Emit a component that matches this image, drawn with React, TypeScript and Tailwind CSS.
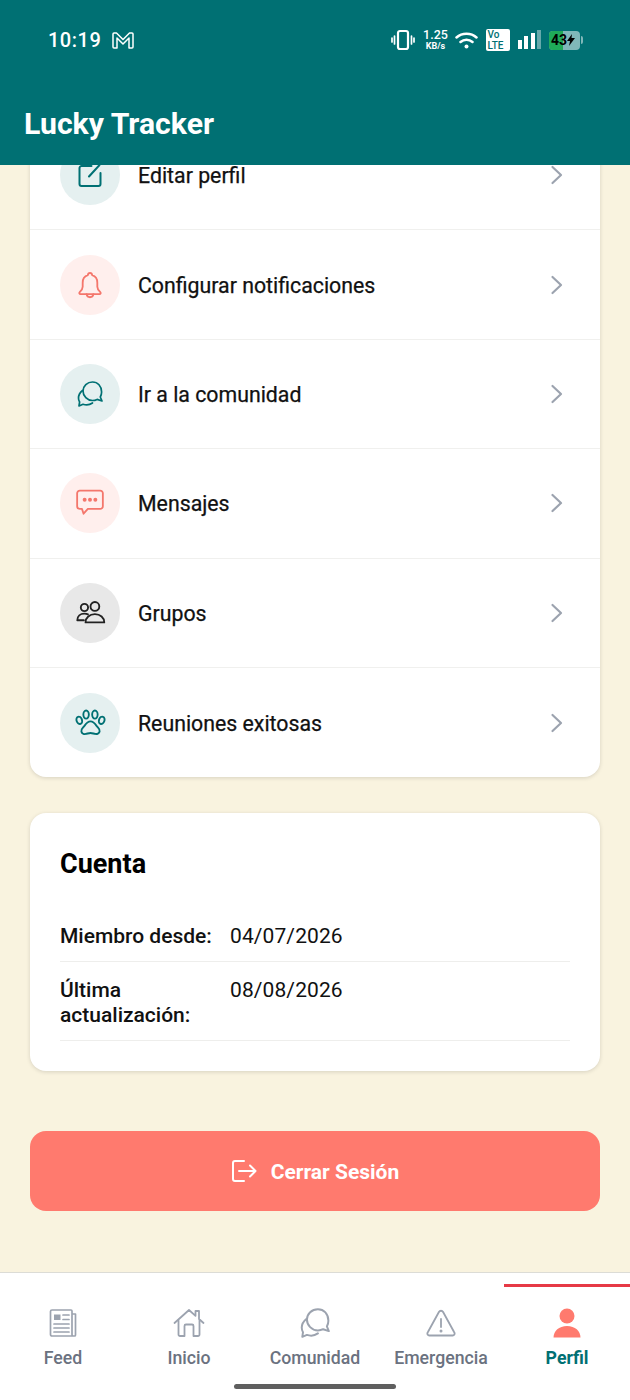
import React from "react";

const s = { fill: "none", stroke: "currentColor", strokeLinecap: "round" as const, strokeLinejoin: "round" as const };

function EditIcon() {
  return (
    <svg width="26" height="26" viewBox="0 0 26 26" {...s} strokeWidth="2">
      <path d="M14.500 4H4.500a2 2 0 0 0-2 2v16a2 2 0 0 0 2 2h17a2 2 0 0 0 2-2V11" />
      <path d="M12 14.500 22.500 3" />
    </svg>
  );
}
function BellIcon() {
  return (
    <svg width="32" height="32" viewBox="0 0 28 28" {...s} strokeWidth="1.600">
      <path d="M14 3.500c-1.200 0-1.800.9-1.900 1.900C9.200 6.300 7.600 8.800 7.600 12v3.500c0 2.200-1.200 3.400-2.600 4.700-.8.8-.3 1.800.7 1.800h16.600c1 0 1.500-1 .7-1.800-1.400-1.300-2.600-2.500-2.600-4.700V12c0-3.200-1.600-5.700-4.500-6.600C15.800 4.400 15.200 3.500 14 3.500Z" />
      <path d="M11 22c.3 1.700 1.400 2.700 3 2.700s2.700-1 3-2.700" />
    </svg>
  );
}
function ChatsIcon({ size = 26 }: { size?: number }) {
  return (
    <svg width={size} height={size} viewBox="0 0 26 26" {...s} strokeWidth="1.700">
      <path d="M15.500 1C10.300 1 6 5 6 10s4.300 9.500 9.500 9.500c1.700 0 3.200-.4 4.600-1.100L25 20l-1.700-4c.8-1.500 1.300-3.200 1.300-5C24.600 5 20.700 1 15.500 1Z" />
      <path d="M5.500 9.500C3 11.500 1.500 14 1.500 17c0 1.500.4 2.900 1.100 4L2 25l4-1.700c3.500 1.200 7 .5 9.500-1.300" />
    </svg>
  );
}
function MessageIcon() {
  return (
    <svg width="30" height="30" viewBox="0 0 28 28" {...s} strokeWidth="1.700">
      <path d="M4.500 2.500h19a2.500 2.500 0 0 1 2.500 2.500v12a2.500 2.500 0 0 1-2.500 2.500H12l-4 4.500-1.500-4.500h-2A2.500 2.500 0 0 1 2 17V5a2.500 2.500 0 0 1 2.500-2.500Z" />
      <circle cx="9" cy="11" r="1" fill="currentColor" />
      <circle cx="14" cy="11" r="1" fill="currentColor" />
      <circle cx="19" cy="11" r="1" fill="currentColor" />
    </svg>
  );
}
function GroupIcon() {
  return (
    <svg width="33" height="33" viewBox="0 0 30 30" {...s} strokeWidth="1.700">
      <circle cx="9.500" cy="10.500" r="3.300" />
      <circle cx="19" cy="9.500" r="4" />
      <path d="M9 22H3c0-3.600 2.700-6 6.500-6 1.200 0 2.300.2 3.200.7" />
      <path d="M10.500 24c0-4.300 3.600-7.500 8.500-7.500s8.500 3.200 8.500 7.500Z" />
    </svg>
  );
}
function PawIcon() {
  return (
    <svg width="33" height="33" viewBox="0 0 30 30" {...s} strokeWidth="1.700">
      <ellipse cx="4.800" cy="13" rx="2.500" ry="3.400" transform="rotate(-20 4.800 13)" />
      <ellipse cx="11" cy="7.800" rx="2.500" ry="3.700" />
      <ellipse cx="19" cy="7.800" rx="2.500" ry="3.700" />
      <ellipse cx="25.200" cy="13" rx="2.500" ry="3.400" transform="rotate(20 25.200 13)" />
      <path d="M15 14c-2.800 0-4.300 2.300-5.600 4.200-1.200 1.700-3.200 2.700-2.700 5 .4 1.800 2.300 2.600 4.100 2.200 1.500-.3 2.800-.9 4.200-.9s2.700.6 4.200.9c1.800.4 3.700-.4 4.100-2.200.5-2.300-1.500-3.300-2.700-5C19.300 16.300 17.800 14 15 14Z" />
    </svg>
  );
}
function NewsIcon() {
  return (
    <svg width="30" height="30" viewBox="0 0 30 30" fill="none" stroke="currentColor" strokeWidth="1.700" strokeLinejoin="round" strokeLinecap="round">
      <path d="M24 6h3.500v21a1 1 0 0 1-1 1H4a1.500 1.500 0 0 1-1.500-1.500V3.500A1.500 1.500 0 0 1 4 2h19a1 1 0 0 1 1 1v23.500a1.500 1.500 0 0 0 1.500 1.500" />
      <rect x="6" y="6.500" width="6.500" height="5.500" fill="currentColor" stroke="none" />
      <path d="M15 7h6M15 11.500h6M6 16h15M6 20h15M6 24h15" />
    </svg>
  );
}
function HomeIcon() {
  return (
    <svg width="32" height="30" viewBox="0 0 32 30" fill="none" stroke="currentColor" strokeWidth="1.800" strokeLinejoin="round" strokeLinecap="round">
      <path d="M1.500 15 16 2l6.500 5.800V3h3.500v8l4.500 4" />
      <path d="M5.500 12.500V26.500a1.500 1.500 0 0 0 1.500 1.500h4.500V18a1.500 1.500 0 0 1 1.500-1.500h6a1.500 1.500 0 0 1 1.500 1.500v10H25a1.500 1.500 0 0 0 1.500-1.500V12.500" />
    </svg>
  );
}
function WarnIcon() {
  return (
    <svg width="30" height="28" viewBox="0 0 30 28" fill="none" stroke="currentColor" strokeWidth="1.800" strokeLinejoin="round" strokeLinecap="round">
      <path d="M12.900 3 1.800 23.300A2 2 0 0 0 3.600 26.500h22.800a2 2 0 0 0 1.800-3.200L17.100 3a2.400 2.400 0 0 0-4.200 0Z" />
      <path d="M15 10v8" />
      <circle cx="15" cy="22" r=".6" fill="currentColor" />
    </svg>
  );
}
function PersonIcon() {
  return (
    <svg width="28" height="30" viewBox="0 0 28 30" fill="#ff7a6e">
      <circle cx="14" cy="8" r="7.500" />
      <path d="M0.500 29.500C.5 23 6 18 14 18s13.500 5 13.500 11.500Z" />
    </svg>
  );
}
function LogoutIcon() {
  return (
    <svg width="26" height="24" viewBox="0 0 26 24" fill="none" stroke="currentColor" strokeWidth="2" strokeLinecap="round" strokeLinejoin="round">
      <path d="M13 2H4a2 2 0 0 0-2 2v16a2 2 0 0 0 2 2h9" />
      <path d="M8 12h16M19 6.500 24.500 12 19 17.500" />
    </svg>
  );
}
function Chevron() {
  return (
    <svg width="14" height="20" viewBox="0 0 14 20" fill="none" stroke="#9ca3af" strokeWidth="2.200" strokeLinecap="round" strokeLinejoin="round">
      <path d="m2.500 2 8.500 8-8.500 8" />
    </svg>
  );
}

function Row({ icon, label, circle, color, last }: { icon: React.ReactNode; label: string; circle: string; color: string; last?: boolean }) {
  return (
    <div className={`flex h-[109.4px] items-center pl-[30px] pr-[36px] ${last ? "" : "border-b border-[#f0f0ee]"}`}>
      <div className={`flex h-[60px] w-[60px] shrink-0 items-center justify-center rounded-full ${circle} ${color}`}>{icon}</div>
      <span className="ml-[18px] flex-1 pt-[2px] text-[21.300px] font-normal leading-[24px] text-[#111111] [-webkit-text-stroke:0.25px_#111111]">{label}</span>
      <Chevron />
    </div>
  );
}

function NavItem({ icon, label, active }: { icon: React.ReactNode; label: string; active?: boolean }) {
  return (
    <div className="flex flex-1 flex-col items-center">
      <div className={`flex h-[32px] items-center justify-center ${active ? "" : "text-[#9ca3af]"}`}>{icon}</div>
      <span className={`mt-[7px] text-[17.7px] leading-[24px] ${active ? "font-bold text-[#007073]" : "font-medium text-[#6b7280]"}`}>{label}</span>
    </div>
  );
}

function StatusBar() {
  return (
    <div className="flex h-[80px] items-center justify-between pl-[48px] pr-[47px] text-white">
      <div className="flex items-center gap-[11px]">
        <span className="text-[20px] font-medium leading-none tracking-[0.5px]">10:19</span>
        <svg width="22" height="18" viewBox="0 0 22 18" fill="none" stroke="currentColor" strokeWidth="1.500" strokeLinejoin="round">
          <path d="M2 2h2.500L11 8.500 17.500 2H20a1 1 0 0 1 1 1v13a1 1 0 0 1-1 1h-3V7l-6 6-6-6v10H2a1 1 0 0 1-1-1V3a1 1 0 0 1 1-1Z" />
        </svg>
      </div>
      <div className="flex items-center">
        <svg width="24" height="22" viewBox="0 0 24 22" fill="none" stroke="currentColor" strokeWidth="2.200" strokeLinecap="round">
          <rect x="7" y="2" width="10" height="18" rx="2" />
          <path d="M3.500 7v8M1 9v4M20.500 7v8M23 9v4" strokeWidth="1.700" />
        </svg>
        <div className="ml-[9px] flex w-[24px] flex-col items-center font-medium leading-none">
          <span className="text-[12.500px] leading-[12px]">1.25</span>
          <span className="text-[9px] font-bold leading-[10px]">KB/s</span>
        </div>
        <svg className="ml-[7px]" width="23" height="17" viewBox="0 0 23 17" fill="none" stroke="currentColor" strokeWidth="2.500" strokeLinecap="round">
          <path d="M1.500 5.500C7 .5 16 .5 21.500 5.500M5.500 10c3.500-3 8.500-3 12 0" />
          <circle cx="11.500" cy="14.500" r="2" fill="currentColor" stroke="none" />
        </svg>
        <div className="ml-[8px] flex h-[22px] w-[24px] flex-col justify-center rounded-[2px] bg-white pl-[2px] text-[10px] font-medium leading-[11px] text-[#007073]">
          <span>Vo</span>
          <span>LTE</span>
        </div>
        <div className="ml-[8px] flex h-[18px] items-end gap-[2.500px]">
          <div className="h-[9px] w-[4px] bg-white" />
          <div className="h-[13px] w-[4px] bg-white" />
          <div className="h-[16px] w-[4px] bg-white" />
          <div className="h-[19px] w-[4px] bg-white/40" />
        </div>
        <div className="ml-[8px] flex items-center">
          <div className="relative flex h-[19px] w-[31px] items-center overflow-hidden rounded-[4px] bg-white/50">
            <div className="absolute inset-y-0 left-0 w-[14px] bg-[#1faa59]" />
            <span className="relative ml-[2px] text-[14px] font-bold leading-none text-black">43</span>
            <svg className="relative" width="8" height="12" viewBox="0 0 8 12" fill="#000">
              <path d="M5 0 0 7h3l-1 5 6-8H4.500Z" />
            </svg>
          </div>
          <div className="ml-[1px] h-[8px] w-[2px] rounded-r bg-white/50" />
        </div>
      </div>
    </div>
  );
}

export default function App() {
  return (
    <div className="flex h-[1400px] w-[630px] flex-col overflow-hidden bg-[#f9f3df] font-['Roboto',sans-serif]">
      <header className="relative z-10 h-[165px] shrink-0 bg-[#007073] text-white">
        <StatusBar />
        <div className="mt-[24px] pl-[24px] text-[30.200px] font-bold leading-[40px]">Lucky Tracker</div>
      </header>

      <main className="flex-1 overflow-hidden px-[30px]">
        <div className="-mt-[44px] rounded-[16px] bg-white shadow-[0_1px_4px_rgba(0,0,0,0.14)]">
          <Row icon={<EditIcon />} label="Editar perfil" circle="bg-[#e5f0f0]" color="text-[#007073]" />
          <Row icon={<BellIcon />} label="Configurar notificaciones" circle="bg-[#ffefed]" color="text-[#f4776c]" />
          <Row icon={<ChatsIcon />} label="Ir a la comunidad" circle="bg-[#e5f0f0]" color="text-[#007073]" />
          <Row icon={<MessageIcon />} label="Mensajes" circle="bg-[#ffefed]" color="text-[#f4776c]" />
          <Row icon={<GroupIcon />} label="Grupos" circle="bg-[#e8e8e8]" color="text-[#222222]" />
          <Row icon={<PawIcon />} label="Reuniones exitosas" circle="bg-[#e5f0f0]" color="text-[#007073]" last />
        </div>

        <section className="mt-[35.600px] h-[258px] rounded-[16px] bg-white px-[30px] pt-[35px] shadow-[0_1px_4px_rgba(0,0,0,0.14)]">
          <h2 className="text-[27px] font-bold leading-[32px] text-black">Cuenta</h2>
          <div className="mt-[32px] flex h-[50px] items-center border-b border-[#eeeeec] text-[21px] leading-[25px] text-[#111111]">
            <span className="w-[170px] shrink-0 font-medium">Miembro desde:</span>
            <span className="tracking-[0.1px]">04/07/2026</span>
          </div>
          <div className="flex h-[79px] border-b border-[#eeeeec] pt-[16px] text-[21px] leading-[25px] text-[#111111]">
            <span className="w-[170px] shrink-0 font-medium">Última actualización:</span>
            <span className="tracking-[0.1px]">08/08/2026</span>
          </div>
        </section>

        <button className="mt-[60px] flex h-[80px] w-full items-center justify-center gap-[14px] rounded-[16px] bg-[#ff7a6e] text-[21px] font-bold text-white">
          <LogoutIcon />
          <span className="pt-[4px]">Cerrar Sesión</span>
        </button>
      </main>

      <nav className="relative flex h-[128px] shrink-0 border-t border-[#dcdcd6] bg-white pt-[34px]">
        <div className="absolute right-0 top-[11px] h-[3px] w-[126px] bg-[#e63946]" />
        <NavItem icon={<NewsIcon />} label="Feed" />
        <NavItem icon={<HomeIcon />} label="Inicio" />
        <NavItem icon={<ChatsIcon size={30} />} label="Comunidad" />
        <NavItem icon={<WarnIcon />} label="Emergencia" />
        <NavItem icon={<PersonIcon />} label="Perfil" active />
        <div className="absolute bottom-[11px] left-[234px] h-[5px] w-[162px] rounded-full bg-[#5f5f5f]" />
      </nav>
    </div>
  );
}
